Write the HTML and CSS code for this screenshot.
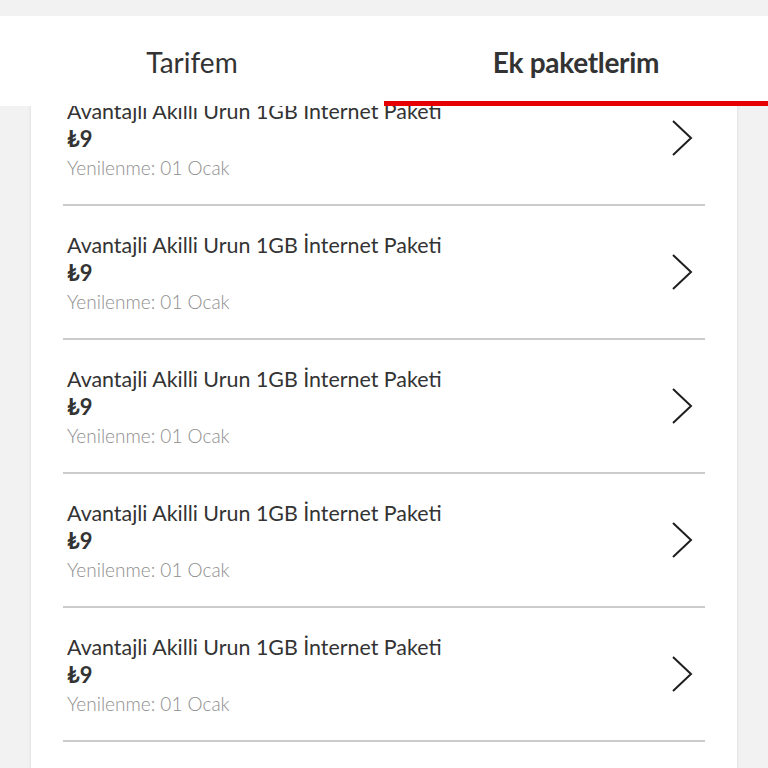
FILE: index.html
```html
<!DOCTYPE html>
<html lang="tr">
<head>
<meta charset="utf-8">
<title>Ek paketlerim</title>
<link rel="stylesheet" href="styles.css">
</head>
<body>
<div class="card">
  <div class="row">
    <div class="info">
      <div class="title">Avantajli Akilli Urun 1GB İnternet Paketi</div>
      <div class="price">₺9</div>
      <div class="renew">Yenilenme: 01 Ocak</div>
    </div>
    <svg class="chev" viewBox="0 0 22 36" width="22" height="36"><polyline points="2,1 20,18 2,35"/></svg>
  </div>
  <div class="row">
    <div class="info">
      <div class="title">Avantajli Akilli Urun 1GB İnternet Paketi</div>
      <div class="price">₺9</div>
      <div class="renew">Yenilenme: 01 Ocak</div>
    </div>
    <svg class="chev" viewBox="0 0 22 36" width="22" height="36"><polyline points="2,1 20,18 2,35"/></svg>
  </div>
  <div class="row">
    <div class="info">
      <div class="title">Avantajli Akilli Urun 1GB İnternet Paketi</div>
      <div class="price">₺9</div>
      <div class="renew">Yenilenme: 01 Ocak</div>
    </div>
    <svg class="chev" viewBox="0 0 22 36" width="22" height="36"><polyline points="2,1 20,18 2,35"/></svg>
  </div>
  <div class="row">
    <div class="info">
      <div class="title">Avantajli Akilli Urun 1GB İnternet Paketi</div>
      <div class="price">₺9</div>
      <div class="renew">Yenilenme: 01 Ocak</div>
    </div>
    <svg class="chev" viewBox="0 0 22 36" width="22" height="36"><polyline points="2,1 20,18 2,35"/></svg>
  </div>
  <div class="row">
    <div class="info">
      <div class="title">Avantajli Akilli Urun 1GB İnternet Paketi</div>
      <div class="price">₺9</div>
      <div class="renew">Yenilenme: 01 Ocak</div>
    </div>
    <svg class="chev" viewBox="0 0 22 36" width="22" height="36"><polyline points="2,1 20,18 2,35"/></svg>
  </div>
  <div class="row">
    <div class="info">
      <div class="title">Avantajli Akilli Urun 1GB İnternet Paketi</div>
      <div class="price">₺9</div>
      <div class="renew">Yenilenme: 01 Ocak</div>
    </div>
    <svg class="chev" viewBox="0 0 22 36" width="22" height="36"><polyline points="2,1 20,18 2,35"/></svg>
  </div>
</div>
<div class="header">
  <div class="tab">Tarifem</div>
  <div class="tab active">Ek paketlerim</div>
</div>
</body>
</html>
```
FILE: styles.css
```css
html, body {
  margin: 0;
  padding: 0;
  height: 768px;
  overflow: hidden;
  background: #f2f2f2;
  font-family: Lato, "Open Sans", sans-serif;
  color: #333;
}
.header {
  position: absolute;
  top: 0;
  left: 0;
  right: 0;
  height: 106px;
  box-sizing: border-box;
  border-top: 16px solid #f2f2f2;
  background: #fff;
  display: grid;
  grid-template-columns: 1fr 1fr;
}
.tab {
  display: flex;
  justify-content: center;
  align-items: center;
  padding-top: 2px;
  font-size: 28px;
  color: #333;
  box-sizing: border-box;
}
.tab.active {
  font-weight: 700;
  letter-spacing: -0.3px;
  border-bottom: 5px solid #e60000;
  padding-top: 7px;
}
.card {
  margin: 0 31px;
  background: #fff;
  box-shadow: 0 0 3px rgba(0, 0, 0, 0.12);
  padding: 72px 32px 0;
  min-height: 800px;
}
.row {
  display: flex;
  align-items: center;
  justify-content: space-between;
  padding: 25px 12px 22px 4px;
  border-bottom: 2px solid #cbcbcb;
}
.title {
  font-size: 21.4px;
  line-height: 28px;
  color: #333;
}
.price {
  font-size: 22px;
  line-height: 28px;
  font-weight: 700;
  color: #333;
}
.renew {
  font-size: 19px;
  line-height: 29px;
  color: #8e8e8e;
  font-weight: 300;
}
.chev {
  display: block;
  margin-top: -4px;
}
.chev polyline {
  fill: none;
  stroke: #1e1e1e;
  stroke-width: 2;
}
```
